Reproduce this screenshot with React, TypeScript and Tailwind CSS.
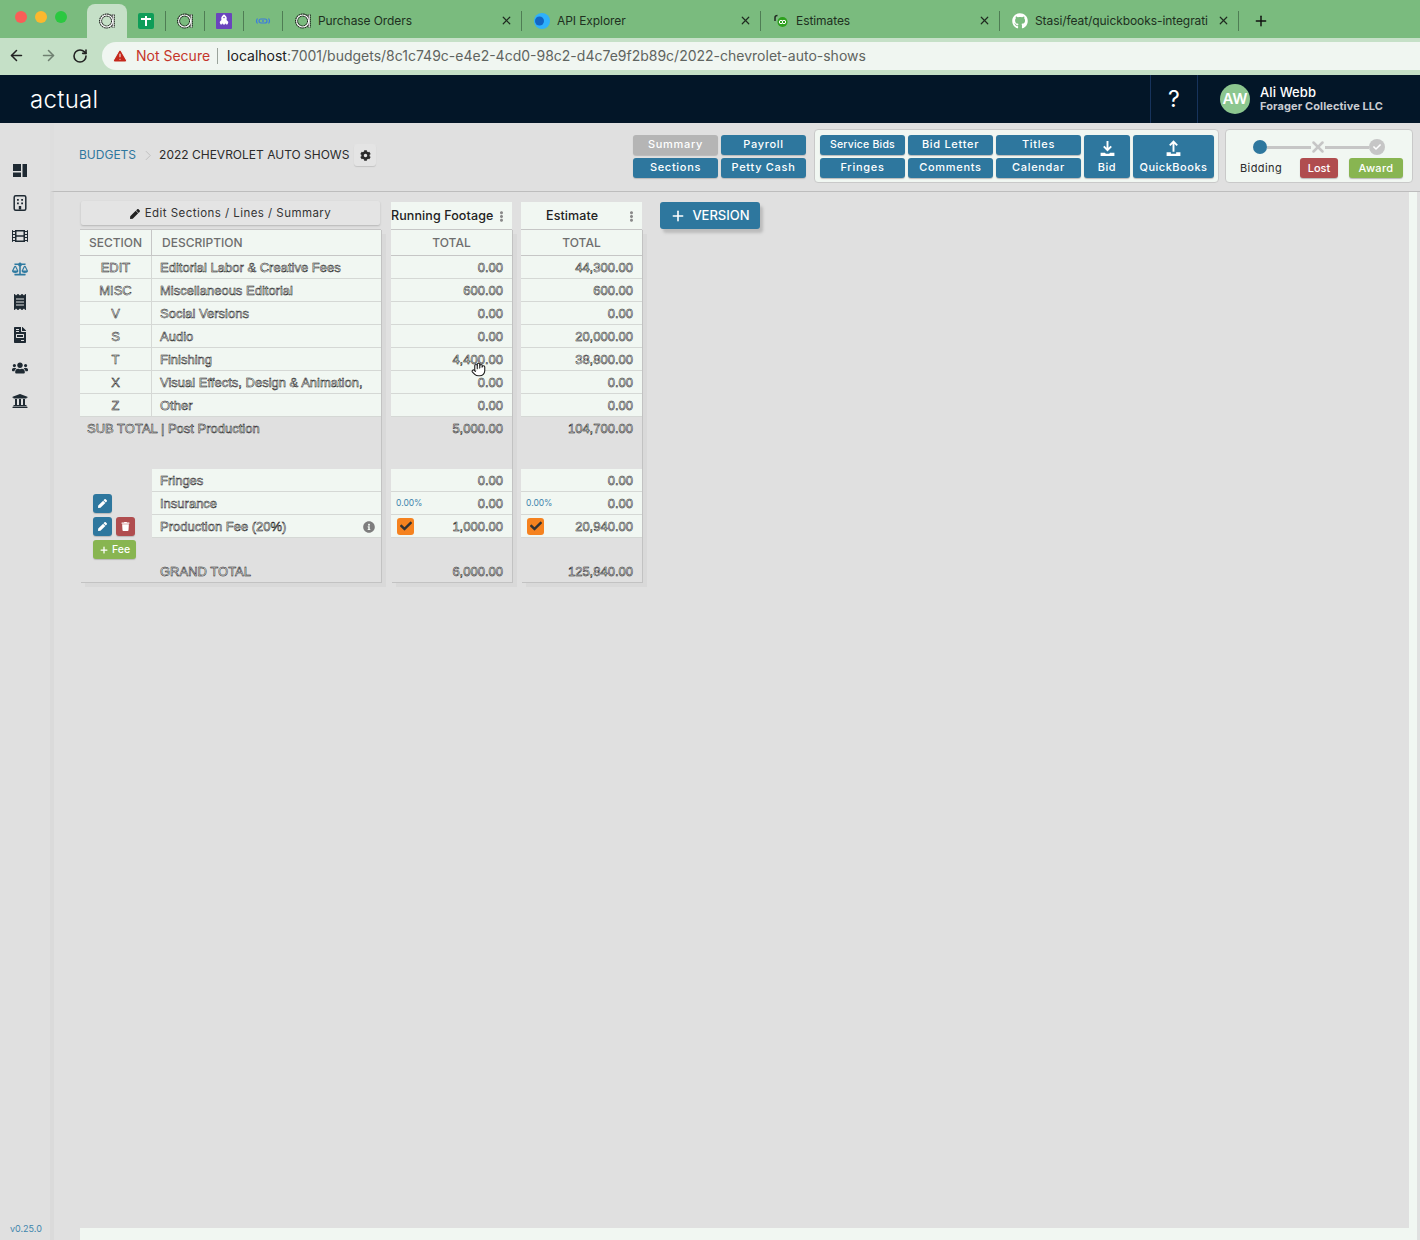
import { ReactNode } from "react";
import { ArrowLeft, ArrowRight, Hand, Plus, RotateCw, TriangleAlert, X } from "lucide-react";
import {
  FaBalanceScale,
  FaCheck,
  FaCog,
  FaEllipsisV,
  FaFileInvoice,
  FaFilm,
  FaGithub,
  FaInfoCircle,
  FaPen,
  FaReceipt,
  FaRocket,
  FaTrash,
  FaUniversity,
  FaUsers,
} from "react-icons/fa";

const rows = [
  { code: "EDIT", name: "Editorial Labor & Creative Fees", a: "0.00", b: "44,300.00" },
  { code: "MISC", name: "Miscellaneous Editorial", a: "600.00", b: "600.00" },
  { code: "V", name: "Social Versions", a: "0.00", b: "0.00" },
  { code: "S", name: "Audio", a: "0.00", b: "20,000.00" },
  { code: "T", name: "Finishing", a: "4,400.00", b: "38,800.00" },
  { code: "X", name: "Visual Effects, Design & Animation,", a: "0.00", b: "0.00" },
  { code: "Z", name: "Other", a: "0.00", b: "0.00" },
];

// the table text in the capture has a hollow, outlined look
const etched = "pt-[1px] font-['Liberation_Sans',sans-serif] text-[13px] text-white [-webkit-text-stroke:0.5px_#111111]";
const blockShadow = "shadow-[1px_1px_0_#c2c2c2,5px_5px_0_#d9d9d9]";

function ActualFavicon() {
  return (
    <svg viewBox="0 0 16 16" className="h-4 w-4 shrink-0">
      <circle cx="7.600" cy="8" r="6" fill="none" stroke="#111" strokeWidth="3" strokeDasharray="1.500 0.500" />
      <path d="M14.200 1.500v13" stroke="#111" strokeWidth="3" strokeDasharray="1.500 0.500" />
      <circle cx="7.600" cy="8" r="6" fill="none" stroke="#fff" strokeWidth="1.100" />
      <path d="M14.200 1.500v13" stroke="#fff" strokeWidth="1.100" />
    </svg>
  );
}

function PinnedTab({ children }: { children: ReactNode }) {
  return (
    <div className="flex h-[20px] w-[39px] items-center justify-center border-r border-[#4f7d54]">
      {children}
    </div>
  );
}

function WideTab({ icon, title }: { icon: ReactNode; title: string }) {
  return (
    <div className="flex h-[20px] w-[239px] items-center border-r border-[#4f7d54] pl-[12px] pr-[8px]">
      <div className="flex w-[16px] shrink-0 items-center justify-center">{icon}</div>
      <span className="ml-[7px] flex-1 overflow-hidden whitespace-nowrap text-[12px] tracking-[-0.08px] text-[#20301f]">{title}</span>
      <X className="ml-[8px] h-[13px] w-[13px] shrink-0 text-[#1f2a20]" strokeWidth={2.2} />
    </div>
  );
}

function TabBar() {
  return (
    <div className="flex h-[38px] items-center bg-[#7abb7e] pl-[15px]">
      <div className="flex w-[72px] items-center gap-[8px] pb-[5px]">
        <span className="h-3 w-3 rounded-full bg-[#f95e57]" />
        <span className="h-3 w-3 rounded-full bg-[#fbb82e]" />
        <span className="h-3 w-3 rounded-full bg-[#2bc840]" />
      </div>
      <div className="mt-[4px] flex h-[34px] w-[40px] items-center justify-center rounded-t-[8px] bg-[#c5e0c7] pb-[1px]">
        <ActualFavicon />
      </div>
      <div className="flex items-center pt-[3px]">
        <PinnedTab>
          <svg viewBox="0 0 16 16" className="h-4 w-4">
            <rect width="16" height="16" rx="2" fill="#0f9d58" />
            <path d="M3 6h10M8 3v10" stroke="#fff" strokeWidth="2" />
          </svg>
        </PinnedTab>
        <PinnedTab>
          <ActualFavicon />
        </PinnedTab>
        <PinnedTab>
          <div className="flex h-4 w-4 items-center justify-center rounded-[1px] bg-[#6a45bd]">
            <FaRocket className="h-[10px] w-[10px] -rotate-45 text-white" />
          </div>
        </PinnedTab>
        <PinnedTab>
          <svg viewBox="0 0 16 16" className="h-4 w-4">
            <path d="M2.500 5.500Q0.500 8 2.500 10.500M13.500 5.500Q15.500 8 13.500 10.500" fill="none" stroke="#3b7be0" strokeWidth="1.200" />
            <rect x="4" y="6" width="8" height="4" rx="2" fill="none" stroke="#3b7be0" strokeWidth="1.200" />
            <circle cx="8" cy="8" r="0.900" fill="#3b7be0" />
          </svg>
        </PinnedTab>
        <WideTab icon={<ActualFavicon />} title="Purchase Orders" />
        <WideTab
          icon={
            <svg viewBox="0 0 16 16" className="h-4 w-4">
              <circle cx="8" cy="8" r="8" fill="#2fb1fb" />
              <circle cx="5.500" cy="8" r="4.500" fill="#1266c4" />
            </svg>
          }
          title="API Explorer"
        />
        <WideTab
          icon={
            <svg viewBox="0 0 16 16" className="h-4 w-4">
              <path d="M2 8V4.500Q2 2.500 4.500 2.500" fill="none" stroke="#1f2a20" strokeWidth="1.500" />
              <circle cx="9.500" cy="9" r="5" fill="#2ca01c" />
              <circle cx="8" cy="9" r="1.700" fill="none" stroke="#fff" />
              <circle cx="11" cy="9" r="1.700" fill="none" stroke="#fff" />
            </svg>
          }
          title="Estimates"
        />
        <WideTab icon={<FaGithub className="h-4 w-4 text-white" />} title="Stasi/feat/quickbooks-integrati" />
        <Plus className="ml-[14px] h-[16px] w-[16px] text-[#111]" strokeWidth={2.2} />
      </div>
    </div>
  );
}

function AddressBar() {
  return (
    <div className="flex h-[37px] items-start bg-[#c5e0c7] pl-[8px] pt-[4px]">
      <ArrowLeft className="mt-[5px] h-[17px] w-[17px] text-[#222]" strokeWidth={2.2} />
      <ArrowRight className="ml-[15px] mt-[5px] h-[17px] w-[17px] text-[#6f8071]" strokeWidth={2.2} />
      <RotateCw className="ml-[15px] mt-[6px] h-[16px] w-[16px] text-[#222]" strokeWidth={2.4} />
      <div className="ml-[14px] flex h-[28px] flex-1 items-center rounded-l-full bg-[#f0f6f1] pb-[1px] pl-[10px]">
        <TriangleAlert className="h-[16px] w-[16px] fill-[#c5281c] text-[#f0f6f1]" strokeWidth={1.6} />
        <span className="ml-[8px] text-[14px] text-[#c5352a]">Not Secure</span>
        <span className="ml-[7px] h-[16px] w-px bg-[#9aa39b]" />
        <span className="ml-[9px] whitespace-nowrap text-[14px] text-[#5f6460]">
          <span className="text-[#1d211e]">localhost</span>:7001/budgets/8c1c749c-e4e2-4cd0-98c2-d4c7e9f2b89c/2022-chevrolet-auto-shows
        </span>
      </div>
    </div>
  );
}

function AppHeader() {
  return (
    <header className="flex h-[48px] items-center bg-[#031628] text-white">
      <span className="ml-[30px] pt-[1px] text-[24px] font-light leading-none tracking-[0.3px]">actual</span>
      <div className="ml-auto flex h-full w-[48px] items-center justify-center border-x border-[#17335c] text-[23px] leading-none">
        ?
      </div>
      <div className="flex w-[222px] items-center pl-[22px]">
        <div className="flex h-[30px] w-[30px] items-center justify-center rounded-full bg-[#8cc68f] text-[15px] font-semibold">
          AW
        </div>
        <div className="ml-[10px] flex flex-col">
          <span className="text-[13px] font-medium leading-[14px] tracking-[0.1px]">Ali Webb</span>
          <span className="text-[11px] font-bold leading-[14px] tracking-[0.1px] text-[#c9ccd2]">Forager Collective LLC</span>
        </div>
      </div>
    </header>
  );
}

function Sidebar() {
  const cls = "h-[16px] w-[16px] text-[#1f2a33]";
  return (
    <aside className="flex w-[50px] flex-col bg-[#e0e0e0] pl-[12px] pt-[39px]">
      <div className="flex flex-col gap-[17px]">
        <svg viewBox="0 0 16 16" className={cls}>
          <path d="M1 2h8v7H1zM1 10.500h8V15H1zM10.500 2H15v13h-4.500z" fill="currentColor" />
        </svg>
        <svg viewBox="0 0 16 16" className={cls}>
          <rect x="2.200" y="0.800" width="11.600" height="14.400" rx="1.500" fill="none" stroke="currentColor" strokeWidth="1.500" />
          <path d="M5 4h1.800v1.800H5zM9.200 4H11v1.800H9.200zM5 7.500h1.800v1.800H5zM9.200 7.500H11v1.800H9.200zM6.800 11h2.400v3.500H6.800z" fill="currentColor" />
        </svg>
        <FaFilm className={cls} />
        <FaBalanceScale className="h-[16px] w-[16px] text-[#2f7aa0]" />
        <FaReceipt className={cls} />
        <FaFileInvoice className={cls} />
        <FaUsers className={cls} />
        <FaUniversity className={cls} />
      </div>
      <span className="-ml-[2px] mt-auto pb-[5px] text-[9px] leading-[12px] text-[#3f86ad]">v0.25.0</span>
    </aside>
  );
}

function Btn({ label, muted, small }: { label: string; muted?: boolean; small?: boolean }) {
  return (
    <div
      className={`flex h-[20px] w-[85px] items-center justify-center rounded-[3px] pb-[1px] font-medium text-white shadow-[0_1px_1px_#b9b9b9] ${
        small ? "text-[10.500px] tracking-[0.2px]" : "text-[11px] tracking-[0.7px]"
      } ${muted ? "bg-[#b5b5b5]" : "bg-[#2e779e]"}`}
    >
      {label}
    </div>
  );
}

function TallBtn({ label, w, children }: { label: string; w: string; children: ReactNode }) {
  return (
    <div className={`flex h-[43px] flex-col items-center justify-end rounded-[3px] bg-[#2e779e] pb-[4px] text-[11px] font-medium tracking-[0.5px] text-white shadow-[0_1px_1px_#b9b9b9] ${w}`}>
      <svg viewBox="0 0 16 16" className="h-[17px] w-[17px]">
        {children}
      </svg>
      <span className="mt-[3px] leading-[14px]">{label}</span>
    </div>
  );
}

function TopBar() {
  return (
    <div className="flex h-[69px] shrink-0 border-b border-l-4 border-b-[#bdbdbd] border-l-[#dedede] pr-[7px]">
      <div className="ml-[25px] mt-[21px] flex h-[22px] items-center text-[12px]">
        <span className="text-[#2e779e]">BUDGETS</span>
        <svg viewBox="0 0 8 12" className="ml-[9px] h-[11px] w-[7px]">
          <path d="M1 1l5 5-5 5" fill="none" stroke="#bcbcbc" />
        </svg>
        <span className="ml-[7px] text-[#2b2b2b]">2022 CHEVROLET AUTO SHOWS</span>
        <div className="ml-[5px] flex h-[22px] w-[22px] items-center justify-center rounded-[3px] bg-[#e4e4e4] shadow-[0_1px_1px_#c4c4c4]">
          <FaCog className="h-[11px] w-[11px] text-[#2a2a2a]" />
        </div>
      </div>

      <div className="ml-auto mt-[12px] grid h-[43px] grid-cols-[85px_85px] gap-[3px]">
        <Btn label="Summary" muted />
        <Btn label="Payroll" />
        <Btn label="Sections" />
        <Btn label="Petty Cash" />
      </div>

      <div className="ml-[8px] mt-[6px] flex h-[54px] items-start gap-[3px] rounded-[4px] border border-[#c9c9c9] bg-[#f1f7f2] pl-[5px] pr-[4px] pt-[5px]">
        <div className="grid grid-cols-[85px_85px_85px] gap-[3px]">
          <Btn label="Service Bids" small />
          <Btn label="Bid Letter" />
          <Btn label="Titles" />
          <Btn label="Fringes" />
          <Btn label="Comments" />
          <Btn label="Calendar" />
        </div>
        <TallBtn label="Bid" w="w-[46px]">
          <path d="M8 1v8M4.500 6 8 9.500 11.500 6" fill="none" stroke="currentColor" strokeWidth="1.800" />
          <path d="M1.500 12h4l1 1h3l1-1h4v3h-13z" fill="currentColor" />
        </TallBtn>
        <TallBtn label="QuickBooks" w="w-[81px]">
          <path d="M8 11V2M4.500 5 8 1.500 11.500 5" fill="none" stroke="currentColor" strokeWidth="1.800" />
          <path d="M1.500 11.500h4v1.500h5v-1.500h4v3.500h-13z" fill="currentColor" />
        </TallBtn>
      </div>

      <div className="ml-[6px] mt-[6px] flex h-[54px] w-[188px] flex-col rounded-[4px] border border-[#c9c9c9] bg-[#f1f7f2]">
        <div className="ml-[27px] mt-[9px] flex h-[16px] w-[132px] items-center">
          <span className="h-[14px] w-[14px] shrink-0 rounded-full bg-[#2e779e]" />
          <span className="h-[3px] flex-1 bg-[#c6c6c6]" />
          <X className="-mx-[2px] h-[18px] w-[18px] shrink-0 text-[#c6c6c6]" strokeWidth={3.4} />
          <span className="h-[3px] flex-1 bg-[#c6c6c6]" />
          <span className="flex h-[16px] w-[16px] shrink-0 items-center justify-center rounded-full bg-[#c6c6c6]">
            <FaCheck className="h-[8px] w-[8px] text-white" />
          </span>
        </div>
        <div className="mt-[3px] flex items-center pl-[14px]">
          <span className="w-[42px] whitespace-nowrap text-[11px] tracking-[0.4px] text-[#2b2b2b]">Bidding</span>
          <span className="ml-[18px] flex h-[20px] w-[38px] items-center justify-center rounded-[3px] bg-[#b04d4f] text-[11px] font-medium text-white shadow-[0_1px_1px_#b9b9b9]">
            Lost
          </span>
          <span className="ml-[11px] flex h-[20px] w-[54px] items-center justify-center rounded-[3px] bg-[#88b551] text-[11px] font-medium tracking-[0.3px] text-white shadow-[0_1px_1px_#b9b9b9]">
            Award
          </span>
        </div>
      </div>
    </div>
  );
}

function SquareBtn({ color, children }: { color: string; children: ReactNode }) {
  return (
    <div className={`flex h-[19px] w-[19px] items-center justify-center rounded-[3px] text-white shadow-[0_1px_1px_#b9b9b9] ${color}`}>
      {children}
    </div>
  );
}

function FeeLabel({ text, info }: { text: string; info?: boolean }) {
  return (
    <div className={`flex flex-1 items-center border-b border-[#d5d8d5] bg-[#f1f7f2] pl-[8px] pr-[6px] ${etched}`}>
      {text}
      {info && <FaInfoCircle className="ml-auto h-[12px] w-[12px] text-[#7d7d7d]" />}
    </div>
  );
}

function LeftBlock() {
  return (
    <div className="flex w-[301px] shrink-0 flex-col">
      <div className="flex h-[24px] w-[299px] items-center justify-center gap-[5px] self-center rounded-[2px] bg-[#e4e4e4] pt-[1px] text-[11.500px] tracking-[0.45px] text-[#333] shadow-[0_1px_2px_#b5b5b5]">
        <FaPen className="h-[10px] w-[10px] text-[#222]" />
        Edit Sections / Lines / Summary
      </div>
      <div className={`mt-[4px] flex h-[353px] flex-col ${blockShadow}`}>
        <div className="flex h-[27px] border-b border-t border-[#c6c6c6] bg-[#f1f7f2] text-[12px] font-medium text-[#6e6e6e]">
          <div className="flex w-[72px] items-center justify-center border-r border-[#c6c6c6] pt-[1px]">SECTION</div>
          <div className="flex items-center pl-[10px] pt-[1px]">DESCRIPTION</div>
        </div>
        {rows.map((row) => (
          <div key={row.code} className="flex h-[23px] border-b border-[#d5d8d5] bg-[#f1f7f2]">
            <div className={`flex w-[72px] items-center justify-center border-r border-[#d5d8d5] ${etched}`}>{row.code}</div>
            <div className={`flex items-center whitespace-nowrap pl-[8px] ${etched}`}>{row.name}</div>
          </div>
        ))}
        <div className={`flex h-[23px] items-center pl-[7px] ${etched}`}>SUB TOTAL | Post Production</div>
        <div className="h-[29px] shrink-0" />
        <div className="flex h-[23px]">
          <div className="w-[72px]" />
          <FeeLabel text="Fringes" />
        </div>
        <div className="flex h-[23px]">
          <div className="flex w-[72px] items-center pl-[13px]">
            <SquareBtn color="bg-[#2e779e]"><FaPen className="h-[9px] w-[9px]" /></SquareBtn>
          </div>
          <FeeLabel text="Insurance" />
        </div>
        <div className="flex h-[23px]">
          <div className="flex w-[72px] items-center gap-[4px] pl-[13px]">
            <SquareBtn color="bg-[#2e779e]"><FaPen className="h-[9px] w-[9px]" /></SquareBtn>
            <SquareBtn color="bg-[#b04d4f]"><FaTrash className="h-[9px] w-[9px]" /></SquareBtn>
          </div>
          <FeeLabel text="Production Fee (20%)" info />
        </div>
        <div className="flex h-[23px] items-center pl-[13px]">
          <div className="flex h-[19px] w-[43px] items-center justify-center gap-[3px] rounded-[3px] bg-[#88b551] text-[10.500px] font-medium text-white shadow-[0_1px_1px_#b9b9b9]">
            <Plus className="h-[10px] w-[10px]" strokeWidth={3} />
            Fee
          </div>
        </div>
        <div className={`flex h-[21px] items-center pl-[80px] ${etched}`}>GRAND TOTAL</div>
      </div>
    </div>
  );
}

function AmountRow({ value, left }: { value: string; left?: ReactNode }) {
  return (
    <div className="flex h-[23px] items-center border-b border-[#d5d8d5] bg-[#f1f7f2] pl-[5px] pr-[9px]">
      {left}
      <span className={`ml-auto ${etched}`}>{value}</span>
    </div>
  );
}

function OrangeCheck() {
  return (
    <div className="ml-[1px] flex h-[17px] w-[17px] items-center justify-center rounded-[3px] bg-[#f5821f]">
      <FaCheck className="h-[12px] w-[12px] text-[#333]" />
    </div>
  );
}

function VersionColumn(props: {
  title: string;
  values: string[];
  subtotal: string;
  fringes: string;
  insurance: string;
  fee: string;
  total: string;
  titleClass: string;
}) {
  return (
    <div className="flex w-[121px] shrink-0 flex-col pt-[1px]">
      <div className="flex h-[27px] items-center bg-[#f1f7f2] pr-[5px] pt-[1px]">
        <span className={`whitespace-nowrap text-[12.500px] font-medium tracking-[0.1px] text-[#222] ${props.titleClass}`}>{props.title}</span>
        <FaEllipsisV className="ml-auto h-[11px] w-[11px] text-[#8a8a8a]" />
      </div>
      <div className={`flex h-[353px] flex-col ${blockShadow}`}>
        <div className="flex h-[27px] shrink-0 items-center justify-center border-b border-t border-[#c6c6c6] bg-[#f1f7f2] pt-[1px] text-[12px] font-medium text-[#6e6e6e]">
          TOTAL
        </div>
        {props.values.map((value, i) => (
          <AmountRow key={i} value={value} />
        ))}
        <div className={`flex h-[23px] items-center justify-end pr-[9px] ${etched}`}>{props.subtotal}</div>
        <div className="h-[29px] shrink-0" />
        <AmountRow value={props.fringes} />
        <AmountRow value={props.insurance} left={<span className="text-[8.500px] text-[#3f86ad]">0.00%</span>} />
        <AmountRow value={props.fee} left={<OrangeCheck />} />
        <div className="h-[23px] shrink-0" />
        <div className={`flex h-[21px] items-center justify-end pr-[9px] ${etched}`}>{props.total}</div>
      </div>
    </div>
  );
}

export default function App() {
  return (
    <div className="flex h-[1240px] flex-col overflow-hidden bg-[#e0e0e0] font-['Inter',sans-serif]">
      <TabBar />
      <AddressBar />
      <AppHeader />
      <div className="flex flex-1">
        <Sidebar />
        <div className="flex min-w-0 flex-1 flex-col">
          <TopBar />
          <div className="flex flex-1 border-l-4 border-[#dadada] pl-[26px] pr-[3px]">
            <div className="flex-1 bg-[#f1f7f2] pb-[12px] pr-[8px]">
              <div className="relative flex h-full items-start bg-[#e0e0e0] pt-[9px]">
                <LeftBlock />
                <div className="ml-[10px]">
                  <VersionColumn
                    title="Running Footage"
                    titleClass=""
                    values={rows.map((r) => r.a)}
                    subtotal="5,000.00"
                    fringes="0.00"
                    insurance="0.00"
                    fee="1,000.00"
                    total="6,000.00"
                  />
                </div>
                <div className="ml-[9px]">
                  <VersionColumn
                    title="Estimate"
                    titleClass="ml-[25px]"
                    values={rows.map((r) => r.b)}
                    subtotal="104,700.00"
                    fringes="0.00"
                    insurance="0.00"
                    fee="20,940.00"
                    total="125,840.00"
                  />
                </div>
                <div className="ml-[18px] mt-[1px] flex h-[27px] w-[100px] items-center justify-center gap-[6px] rounded-[3px] bg-[#2e779e] text-[13px] font-medium text-white shadow-[3px_4px_3px_#bcbcbc]">
                  <Plus className="h-[16px] w-[16px]" strokeWidth={2.4} />
                  VERSION
                </div>
                <Hand className="absolute left-[391px] top-[170px] h-[15px] w-[15px] fill-white text-[#222]" strokeWidth={1.8} />
              </div>
            </div>
          </div>
        </div>
      </div>
    </div>
  );
}
